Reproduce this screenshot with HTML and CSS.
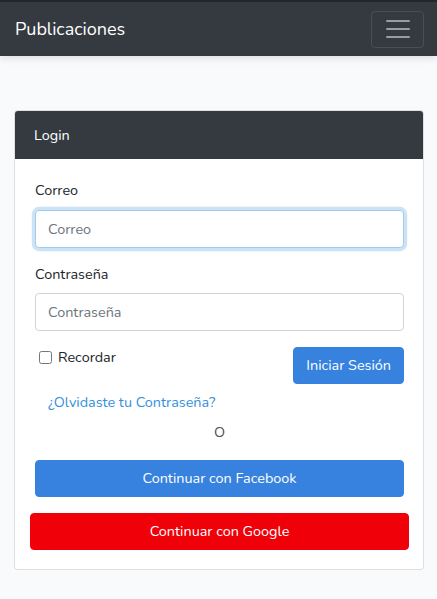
FILE: index.html
```
<!DOCTYPE html>
<html lang="es">
<head>
<meta charset="utf-8">
<title>Publicaciones</title>
<link rel="stylesheet" href="styles.css">
</head>
<body>
<nav class="navbar">
  <a class="brand" href="#">Publicaciones</a>
  <button class="toggler" type="button" aria-label="Menú">
    <svg width="30" height="30" viewBox="0 0 30 30"><path d="M4 7h22M4 15h22M4 23h22" stroke="rgba(255,255,255,0.5)" stroke-width="2" stroke-linecap="round"/></svg>
  </button>
</nav>
<main class="container">
  <div class="card">
    <div class="card-header">Login</div>
    <div class="card-body">
      <div class="form-group">
        <label class="label" for="email">Correo</label>
        <input class="input focused" id="email" type="email" placeholder="Correo">
      </div>
      <div class="form-group">
        <label class="label" for="pass">Contraseña</label>
        <input class="input" id="pass" type="password" placeholder="Contraseña">
      </div>
      <div class="row">
        <label class="check"><input type="checkbox" class="checkbox"> Recordar</label>
        <button class="btn btn-primary" type="button">Iniciar Sesión</button>
      </div>
      <a class="forgot" href="#">¿Olvidaste tu Contraseña?</a>
      <div class="or">O</div>
      <button class="btn btn-primary btn-block" type="button">Continuar con Facebook</button>
      <button class="btn btn-google" type="button">Continuar con Google</button>
    </div>
  </div>
</main>
</body>
</html>
```

FILE: styles.css
```
* { box-sizing: border-box; }
html, body { margin: 0; }
body {
  background: #f8fafc;
  font-family: "Nunito", "Lato", "Open Sans", sans-serif;
  font-size: 14.4px;
  line-height: 1.5;
  color: #212529;
}
.navbar {
  height: 56px;
  background: #343a40;
  border-top: 2px solid #23272b;
  display: flex;
  align-items: center;
  justify-content: space-between;
  padding: 0 13px 0 15px;
  box-shadow: 0 2px 8px rgba(0,0,0,0.12);
}
.brand {
  color: #fff;
  text-decoration: none;
  font-size: 18px;
  line-height: 1;
}
.toggler {
  width: 53px;
  height: 37px;
  background: transparent;
  border: 1px solid rgba(255,255,255,0.1);
  border-radius: 4px;
  display: flex;
  align-items: center;
  justify-content: center;
  padding: 0;
}
.container {
  padding: 54px 13px 28px 14px;
}
.card {
  background: #fff;
  border: 1px solid rgba(0,0,0,0.125);
  border-radius: 4px;
  overflow: hidden;
}
.card-header {
  background: #343a40;
  color: #fff;
  padding: 15px 20px 0;
  height: 49px;
  line-height: 21px;
  margin: -1px -1px 0;
}
.card-body {
  padding: 21px 19px 19px 20px;
  display: flex;
  flex-direction: column;
}
.form-group { display: flex; flex-direction: column; margin-bottom: 16px; }
.label { margin-bottom: 8px; line-height: 21.6px; }
.input {
  height: 38px;
  padding: 6px 12px;
  font: inherit;
  color: #495057;
  border: 1px solid #ced4da;
  border-radius: 4px;
  background: #fff;
  outline: none;
}
.input::placeholder { color: #6c757d; }
.input.focused {
  border-color: #a1cbef;
  box-shadow: 0 0 0 3.2px rgba(52,144,220,0.25);
}
.row {
  display: flex;
  justify-content: space-between;
  align-items: flex-start;
}
.check {
  display: flex;
  align-items: center;
  gap: 6px;
  padding-left: 4px;
  line-height: 21.6px;
}
.checkbox {
  width: 13px; height: 13px; margin: 0;
}
.btn {
  font: inherit;
  border: 1px solid transparent;
  border-radius: 4px;
  height: 37px;
  padding: 0 12px;
  color: #fff;
  cursor: pointer;
}
.btn-primary { background: #3682de; border-color: #3682de; }
.forgot {
  color: #3490dc;
  text-decoration: none;
  margin: 8px 0 0 13px;
  line-height: 21.6px;
}
.or {
  text-align: center;
  color: #495057;
  margin: 8px 0 17px;
  line-height: 21.6px;
}
.btn-block { width: 100%; }
.btn-google {
  background: #f00008;
  border-color: #f00008;
  margin: 16px -5px 0 -5px;
}
```
